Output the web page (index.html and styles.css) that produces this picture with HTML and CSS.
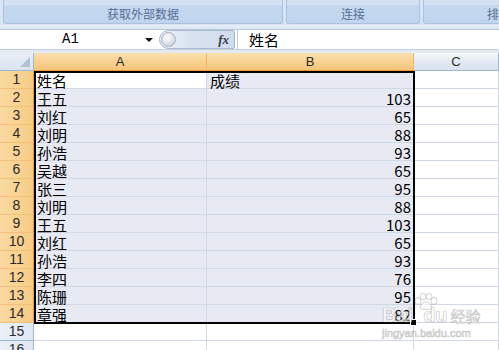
FILE: index.html
```html
<!DOCTYPE html>
<html lang="zh">
<head>
<meta charset="utf-8">
<title>Excel</title>
<link rel="stylesheet" href="styles.css">
</head>
<body>
<div class="ribbon">
  <div class="group g1"><span class="glabel">获取外部数据</span></div>
  <div class="group g2"><span class="glabel">连接</span></div>
  <div class="group g3"><span class="glabel">排</span></div>
</div>
<div class="strip"></div>
<div class="fbar">
  <div class="namebox"><span class="name">A1</span><span class="arrow"></span></div>
  <div class="pill"><span class="knob"></span><span class="fx">fx</span></div>
  <div class="formula">姓名</div>
</div>
<div class="strip2"></div>
<div class="sheet">
  <div class="corner"></div>
  <div class="ch sel-h">A</div>
  <div class="ch sel-h">B</div>
  <div class="ch">C</div>

  <div class="rh sel-r">1</div><div class="c act">姓名</div><div class="c s">成绩</div><div class="c"></div>
  <div class="rh sel-r">2</div><div class="c s">王五</div><div class="c s n">103</div><div class="c"></div>
  <div class="rh sel-r">3</div><div class="c s">刘红</div><div class="c s n">65</div><div class="c"></div>
  <div class="rh sel-r">4</div><div class="c s">刘明</div><div class="c s n">88</div><div class="c"></div>
  <div class="rh sel-r">5</div><div class="c s">孙浩</div><div class="c s n">93</div><div class="c"></div>
  <div class="rh sel-r">6</div><div class="c s">吴越</div><div class="c s n">65</div><div class="c"></div>
  <div class="rh sel-r">7</div><div class="c s">张三</div><div class="c s n">95</div><div class="c"></div>
  <div class="rh sel-r">8</div><div class="c s">刘明</div><div class="c s n">88</div><div class="c"></div>
  <div class="rh sel-r">9</div><div class="c s">王五</div><div class="c s n">103</div><div class="c"></div>
  <div class="rh sel-r">10</div><div class="c s">刘红</div><div class="c s n">65</div><div class="c"></div>
  <div class="rh sel-r">11</div><div class="c s">孙浩</div><div class="c s n">93</div><div class="c"></div>
  <div class="rh sel-r">12</div><div class="c s">李四</div><div class="c s n">76</div><div class="c"></div>
  <div class="rh sel-r">13</div><div class="c s">陈珊</div><div class="c s n">95</div><div class="c"></div>
  <div class="rh sel-r">14</div><div class="c s">章强</div><div class="c s n">82</div><div class="c"></div>
  <div class="rh">15</div><div class="c"></div><div class="c"></div><div class="c"></div>
  <div class="rh">16</div><div class="c"></div><div class="c"></div><div class="c"></div>

  <div class="selection"><span class="handle"></span></div>
  <div class="watermark">
    <svg class="paw" width="26" height="18" viewBox="0 0 26 18">
      <ellipse cx="5" cy="8" rx="3" ry="3.5"/>
      <ellipse cx="10" cy="3.5" rx="3" ry="3.2"/>
      <ellipse cx="16" cy="3.5" rx="3" ry="3.2"/>
      <ellipse cx="21" cy="8" rx="3" ry="3.5"/>
      <path d="M7 15 C8 10 11 9 13 9 C15 9 18 10 19 15 C17 17 9 17 7 15 Z"/>
    </svg>
    <div class="wm1"><span>Bai</span><span class="du">du</span><span class="jy">经验</span></div>
    <div class="wm2">jingyan.baidu.com</div>
  </div>
</div>
</body>
</html>
```
FILE: styles.css
```css
html, body {
  margin: 0;
  padding: 0;
}
body {
  width: 499px;
  height: 350px;
  overflow: hidden;
  background: #ffffff;
  font-family: "Noto Sans CJK SC", "Liberation Sans", sans-serif;
  color: #000;
}

/* ribbon */
.ribbon {
  height: 25px;
  display: flex;
  gap: 3px;
  padding-left: 3px;
  background: linear-gradient(#dbe7f6, #d5e3f4);
  box-sizing: border-box;
  overflow: hidden;
}
.group {
  height: 24px;
  box-sizing: border-box;
  border: 1px solid #a9c2e0;
  border-top: none;
  border-radius: 0 0 3px 3px;
  background: linear-gradient(#d3e1f3 0, #d3e1f3 5px, #c5d8f0 5px, #c1d4ee 100%);
  display: flex;
  align-items: flex-end;
  flex-shrink: 0;
}
.g1 { width: 280px; justify-content: center; }
.g2 { width: 134px; justify-content: center; }
.g3 { width: 200px; padding-left: 63px; }
.glabel {
  font-size: 12px;
  line-height: 19px;
  color: #566f92;
  white-space: nowrap;
}
.strip {
  height: 5px;
  box-sizing: border-box;
  background: linear-gradient(#e6eef8, #dbe5f1);
  border-bottom: 1px solid #b9c8da;
}

/* formula bar */
.fbar {
  height: 20px;
  display: flex;
  background: #ffffff;
  box-sizing: border-box;
  border-bottom: 1px solid #c4cfdd;
}
.namebox {
  width: 159px;
  display: flex;
  align-items: center;
  flex-shrink: 0;
}
.name {
  width: 141px;
  text-align: center;
  font-family: "Liberation Mono", monospace;
  font-size: 14px;
  line-height: 19px;
}
.arrow {
  width: 0;
  height: 0;
  border-left: 4px solid transparent;
  border-right: 4px solid transparent;
  border-top: 4px solid #111;
  margin-left: 4px;
}
.pill {
  width: 76px;
  height: 19px;
  box-sizing: border-box;
  border: 1px solid #a8b8cd;
  border-radius: 10px 2px 2px 10px;
  background: linear-gradient(to right, #eef2f8, #d9e3f0 40%, #d0dcee);
  display: flex;
  align-items: center;
  justify-content: space-between;
  padding: 0 5px 0 1px;
  flex-shrink: 0;
}
.knob {
  width: 15px;
  height: 15px;
  border-radius: 50%;
  box-sizing: border-box;
  border: 1px solid #a5b2c3;
  background: radial-gradient(circle at 40% 35%, #ffffff, #d7dde6 60%, #b9c3d0);
}
.fx {
  font-family: "Liberation Serif", serif;
  font-style: italic;
  font-weight: bold;
  font-size: 13px;
  color: #3a3a3a;
  line-height: 17px;
}
.formula {
  flex: 1;
  margin-left: 2px;
  border-left: 1px solid #c4cfdd;
  padding-left: 11px;
  font-size: 15px;
  line-height: 19px;
}
.strip2 {
  height: 3px;
  background: #e4eaf2;
}

/* sheet */
.sheet {
  position: relative;
  display: grid;
  grid-template-columns: 34px 173px 207px 85px;
  grid-template-rows: repeat(17, 18px);
  height: 297px;
  overflow: hidden;
}
.sheet > div {
  box-sizing: border-box;
}
.corner {
  position: relative;
  background: linear-gradient(#e9eff7, #d9e3ef);
  border-right: 1px solid #9eb6ce;
  border-bottom: 1px solid #9eb6ce;
}
.corner::after {
  content: "";
  position: absolute;
  right: 3px;
  bottom: 3px;
  width: 0;
  height: 0;
  border-left: 10px solid transparent;
  border-bottom: 10px solid #b3c3d7;
}
.ch {
  font-family: "Liberation Sans", sans-serif;
  font-size: 13px;
  line-height: 17px;
  text-align: center;
  color: #2b2b2b;
  background: linear-gradient(#f7f9fc, #e3e9f2 50%, #d9e2ee);
  border-right: 1px solid #9eb6ce;
  border-bottom: 1px solid #9eb6ce;
}
.ch.sel-h {
  background: linear-gradient(#fbe1b0, #f8d292 50%, #f4c47a);
  border-right: 1px solid #f1b567;
  border-bottom: 1px solid #f29536;
}
.rh {
  font-family: "Liberation Sans", sans-serif;
  font-size: 14px;
  line-height: 17px;
  text-align: center;
  color: #2b2b2b;
  background: linear-gradient(to right, #eaf0f8, #dfe7f2);
  border-right: 1px solid #9eb6ce;
  border-bottom: 1px solid #9eb6ce;
}
.rh.sel-r {
  background: linear-gradient(to right, #fad9a0, #f7cd87);
  border-right: 1px solid #f29536;
  border-bottom: 1px solid #f0c07c;
}
.c {
  border-right: 1px solid #d0d7e5;
  border-bottom: 1px solid #d0d7e5;
  font-size: 15px;
  line-height: 15px;
  padding: 2px 2px 0 3px;
  white-space: nowrap;
  background: #ffffff;
}
.c.s { background: #e8eaf3; }
.c.act { background: #ffffff; }
.c.n { text-align: right; padding-right: 2px; }

.selection {
  position: absolute;
  grid-column: 2 / 4;
  grid-row: 2 / 16;
  left: 0;
  top: 0;
  right: -1px;
  bottom: -1px;
  border: 2px solid #000;
  pointer-events: none;
}
.handle {
  position: absolute;
  right: -4px;
  bottom: -4px;
  width: 5px;
  height: 5px;
  background: #000;
  border: 1px solid #fff;
}

.watermark {
  position: absolute;
  left: 380px;
  top: 240px;
  width: 110px;
  pointer-events: none;
  font-family: "Liberation Sans", sans-serif;
  color: rgba(255, 255, 255, 0.65);
  -webkit-text-stroke: 0.7px rgba(150, 150, 150, 0.55);
}
.paw {
  position: absolute;
  left: 33px;
  top: 0;
  fill: rgba(255, 255, 255, 0.6);
  stroke: rgba(150, 150, 150, 0.55);
  stroke-width: 0.8;
}
.wm1 {
  position: absolute;
  left: 2px;
  top: 12px;
  font-size: 20px;
  font-weight: bold;
  line-height: 20px;
  white-space: nowrap;
}
.wm1 .du { margin-left: 10px; }
.wm1 .jy {
  margin-left: 3px;
  font-family: "Noto Sans CJK SC", sans-serif;
  font-size: 15px;
  font-weight: normal;
}
.wm2 {
  position: absolute;
  left: 2px;
  top: 34px;
  font-size: 11px;
  line-height: 12px;
  white-space: nowrap;
}
```
